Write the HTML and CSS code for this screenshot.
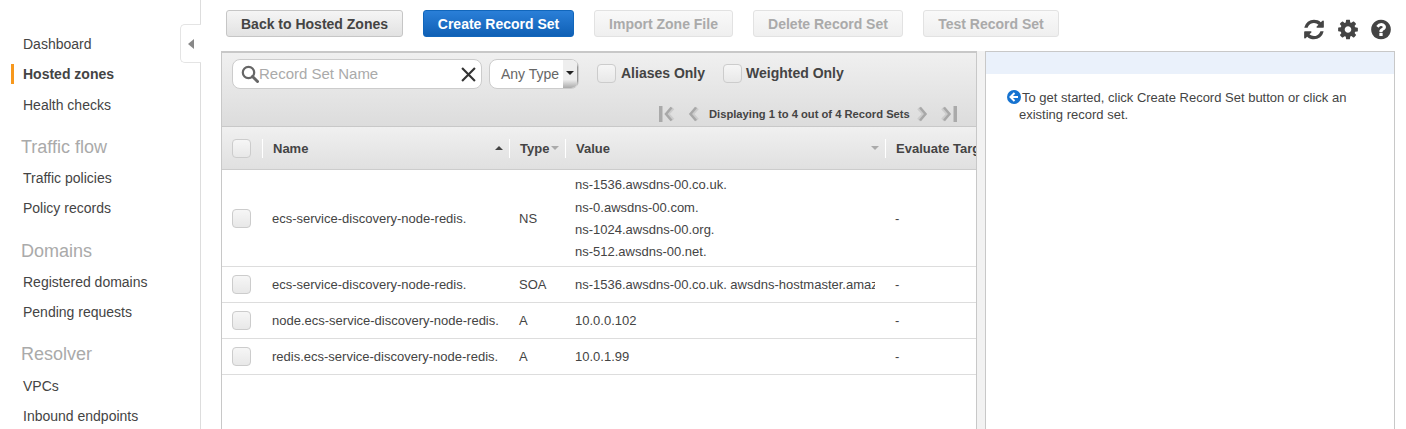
FILE: index.html
```html
<!DOCTYPE html>
<html lang="en">
<head>
  <meta charset="UTF-8">
  <meta name="viewport" content="width=device-width, initial-scale=1.0">
  <title>Route 53 Record Sets</title>
  <link rel="stylesheet" href="styles.css">
</head>
<body>
  <div class="page">
    <nav class="sidebar">
      <a class="nav-item">Dashboard</a>
      <a class="nav-item active">Hosted zones</a>
      <a class="nav-item">Health checks</a>
      <h2 class="nav-head">Traffic flow</h2>
      <a class="nav-item">Traffic policies</a>
      <a class="nav-item">Policy records</a>
      <h2 class="nav-head">Domains</h2>
      <a class="nav-item">Registered domains</a>
      <a class="nav-item">Pending requests</a>
      <h2 class="nav-head">Resolver</h2>
      <a class="nav-item">VPCs</a>
      <a class="nav-item">Inbound endpoints</a>
      <div class="collapse-tab"><span class="collapse-arrow"></span></div>
    </nav>

    <main class="main">
      <div class="toolbar">
        <button class="btn btn-back">Back to Hosted Zones</button>
        <button class="btn btn-primary">Create Record Set</button>
        <button class="btn btn-off btn-import">Import Zone File</button>
        <button class="btn btn-off btn-delete">Delete Record Set</button>
        <button class="btn btn-off btn-test">Test Record Set</button>
        <div class="tool-icons">
          <svg class="tool-icon" viewBox="0 0 1536 1792"><path d="M1511 1056q0 5-1 7-64 268-268 434.5t-478 166.5q-146 0-282.5-55t-243.5-157l-129 129q-19 19-45 19t-45-19-19-45v-448q0-26 19-45t45-19h448q26 0 45 19t19 45-19 45l-137 137q71 66 161 102t187 36q134 0 250-65t186-179q11-17 53-117 8-23 30-23h192q13 0 22.5 9.5t9.5 22.5zm25-800v448q0 26-19 45t-45 19h-448q-26 0-45-19t-19-45 19-45l138-138q-148-137-349-137-134 0-250 65t-186 179q-11 17-53 117-8 23-30 23h-199q-13 0-22.5-9.5t-9.5-22.5v-7q65-268 270-434.5t480-166.5q146 0 284 55.5t245 156.5l130-129q19-19 45-19t45 19 19 45z"/></svg>
          <svg class="tool-icon" viewBox="0 0 1536 1792"><path d="M1024 896q0-106-75-181t-181-75-181 75-75 181 75 181 181 75 181-75 75-181zm512-109v222q0 12-8 23t-20 13l-185 28q-19 54-39 91 35 50 107 138 10 12 10 25t-9 23q-27 37-99 108t-94 71q-12 0-26-9l-138-108q-44 23-91 38-16 136-29 186-7 28-36 28h-222q-14 0-24.5-8.5t-11.5-21.5l-28-184q-49-16-90-37l-141 107q-10 9-25 9-14 0-25-11-126-114-165-168-7-10-7-23 0-12 8-23 15-21 51-66.5t54-70.5q-27-50-41-99l-183-27q-13-2-21-12.5t-8-23.5v-222q0-12 8-23t19-13l186-28q14-46 39-92-40-57-107-138-10-12-10-24 0-10 9-23 26-36 98.5-107.5t94.5-71.5q13 0 26 10l138 107q44-23 91-38 16-136 29-186 7-28 36-28h222q14 0 24.5 8.5t11.5 21.5l28 184q49 16 90 37l142-107q9-9 24-9 13 0 25 10 129 119 165 170 7 8 7 22 0 12-8 23-15 21-51 66.5t-54 70.5q26 50 41 98l183 28q13 2 21 12.5t8 23.5z"/></svg>
          <svg class="tool-icon" viewBox="0 0 1536 1792"><path d="M896 1376v-192q0-14-9-23t-23-9h-192q-14 0-23 9t-9 23v192q0 14 9 23t23 9h192q14 0 23-9t9-23zm256-672q0-88-55.5-163t-138.5-116-170-41q-243 0-371 213-15 24 8 42l132 100q7 6 19 6 16 0 25-12 53-68 86-92 34-24 86-24 48 0 85.5 26t37.5 59q0 38-20 61t-68 45q-63 28-115.5 86.5t-52.5 125.5v36q0 14 9 23t23 9h192q14 0 23-9t9-23q0-19 21.5-49.5t54.5-49.5q32-18 49-28.5t46-35 44.5-48 28-60.5 12.5-81zm384 192q0 209-103 385.5t-279.5 279.5-385.5 103-385.5-103-279.5-279.5-103-385.5 103-385.5 279.5-279.5 385.5-103 385.5 103 279.5 279.5 103 385.5z"/></svg>
        </div>
      </div>

      <div class="panels">
        <section class="records">
          <div class="filters">
            <div class="filter-row">
              <div class="search">
                <svg class="search-icon" viewBox="0 0 18 18"><circle cx="7.5" cy="7.5" r="5.7" fill="none" stroke="#666" stroke-width="2.2"/><path d="M11.5 11.5l5 5" stroke="#666" stroke-width="3" stroke-linecap="round"/></svg>
                <span class="search-text">Record Set Name</span>
                <svg class="search-clear" viewBox="0 0 14 14"><path d="M1 1l12 12M13 1L1 13" stroke="#333" stroke-width="2"/></svg>
              </div>
              <div class="type-select">
                <span class="type-text">Any Type</span>
                <span class="type-btn"><span class="type-caret"></span></span>
              </div>
              <label class="check-label check-aliases"><span class="checkbox"></span>Aliases Only</label>
              <label class="check-label check-weighted"><span class="checkbox"></span>Weighted Only</label>
            </div>
            <div class="pager">
              <svg class="pager-icon pager-first" viewBox="0 0 18 16"><path d="M2 0h3.500v16H2z" fill="#aaa"/><path d="M16 2l-5.500 6 5.500 6" fill="none" stroke="#ccc" stroke-width="3.500"/><path d="M14.500 1.500L9 8l5.500 6.500" fill="none" stroke="#a8a8a8" stroke-width="2.500"/></svg>
              <svg class="pager-icon pager-prev" viewBox="0 0 12 16"><path d="M9.500 2L4 8l5.500 6" fill="none" stroke="#ccc" stroke-width="3.500"/><path d="M8 1.500L2.500 8 8 14.500" fill="none" stroke="#a8a8a8" stroke-width="2.500"/></svg>
              <span class="pager-text">Displaying 1 to 4 out of 4 Record Sets</span>
              <svg class="pager-icon pager-next" viewBox="0 0 12 16"><path d="M2.500 2L8 8l-5.500 6" fill="none" stroke="#ccc" stroke-width="3.500"/><path d="M4 1.500L9.500 8 4 14.500" fill="none" stroke="#a8a8a8" stroke-width="2.500"/></svg>
              <svg class="pager-icon pager-last" viewBox="0 0 18 16"><path d="M14.500 0H18v16h-3.500z" fill="#aaa"/><path d="M3.500 2L9 8l-5.500 6" fill="none" stroke="#ccc" stroke-width="3.500"/><path d="M5 1.500L10.500 8 5 14.500" fill="none" stroke="#a8a8a8" stroke-width="2.500"/></svg>
            </div>
          </div>

          <table class="grid">
            <colgroup>
              <col class="col-check"><col class="col-name"><col class="col-type"><col class="col-value"><col class="col-eval">
            </colgroup>
            <thead>
              <tr>
                <th class="check-cell"><span class="checkbox"></span></th>
                <th><div class="th-in">Name<span class="sort sort-up"></span></div></th>
                <th><div class="th-in">Type<span class="sort"></span></div></th>
                <th><div class="th-in">Value<span class="sort"></span></div></th>
                <th><div class="th-in">Evaluate Target Health</div></th>
              </tr>
            </thead>
            <tbody>
              <tr class="row-ns">
                <td class="check-cell"><span class="checkbox"></span></td>
                <td>ecs-service-discovery-node-redis.</td>
                <td>NS</td>
                <td><div class="value-line">ns-1536.awsdns-00.co.uk.</div><div class="value-line">ns-0.awsdns-00.com.</div><div class="value-line">ns-1024.awsdns-00.org.</div><div class="value-line">ns-512.awsdns-00.net.</div></td>
                <td>-</td>
              </tr>
              <tr>
                <td class="check-cell"><span class="checkbox"></span></td>
                <td>ecs-service-discovery-node-redis.</td>
                <td>SOA</td>
                <td><div class="value-clip">ns-1536.awsdns-00.co.uk. awsdns-hostmaster.amaz</div></td>
                <td>-</td>
              </tr>
              <tr>
                <td class="check-cell"><span class="checkbox"></span></td>
                <td>node.ecs-service-discovery-node-redis.</td>
                <td>A</td>
                <td>10.0.0.102</td>
                <td>-</td>
              </tr>
              <tr>
                <td class="check-cell"><span class="checkbox"></span></td>
                <td>redis.ecs-service-discovery-node-redis.</td>
                <td>A</td>
                <td>10.0.1.99</td>
                <td>-</td>
              </tr>
            </tbody>
          </table>
        </section>

        <div class="splitter"></div>

        <aside class="details">
          <div class="details-bar"></div>
          <p class="details-text">
            <svg class="info-icon" viewBox="0 0 14 14"><circle cx="7" cy="7" r="7" fill="#1673d0"/><path d="M7.500 3L3.500 7l4 4M4 7h7" fill="none" stroke="#fff" stroke-width="2"/></svg>To get started, click Create Record Set button or click an existing record set.
          </p>
        </aside>
      </div>
    </main>
  </div>
</body>
</html>
```

FILE: styles.css
```css
html, body {
  margin: 0;
  height: 429px;
  overflow: hidden;
  background: white;
  color: #444;
  font-family: "Liberation Sans", Arial, sans-serif;
}
.page {
  display: flex;
  height: 429px;
}

/* sidebar */
.sidebar {
  position: relative;
  flex: 0 0 201px;
  box-sizing: border-box;
  padding: 29.2px 0 0 23px;
  border-right: 1px solid #ddd;
}
.nav-item {
  display: block;
  height: 30.2px;
  line-height: 30px;
  font-size: 14px;
  color: #444;
  position: relative;
}
.nav-item.active {
  font-weight: bold;
}
.nav-item.active::before {
  content: "";
  position: absolute;
  left: -12px;
  top: 5px;
  width: 3px;
  height: 20px;
  background: #f7981d;
}
.nav-head {
  margin: 11.2px 0 0 -2px;
  height: 32.2px;
  line-height: 32px;
  font-size: 18px;
  font-weight: normal;
  color: #aaa;
}
.collapse-tab {
  position: absolute;
  left: 180px;
  top: 24px;
  width: 21px;
  height: 39px;
  box-sizing: border-box;
  background: white;
  border: 1px solid #e4e4e4;
  border-right: none;
  border-radius: 5px 0 0 5px;
  display: flex;
  align-items: center;
  padding-left: 7px;
}
.collapse-arrow {
  border-right: 6px solid #888;
  border-top: 5px solid transparent;
  border-bottom: 5px solid transparent;
}

/* toolbar */
.main {
  flex: 1;
  min-width: 0;
  padding: 10px 11px 0 20px;
}
.toolbar {
  display: flex;
  height: 41px;
  padding-left: 5px;
}
.btn {
  height: 27px;
  padding: 0;
  margin-right: 20px;
  font-family: inherit;
  font-size: 14px;
  font-weight: bold;
  color: #444;
  border: 1px solid #c6c6c6;
  border-radius: 3px;
  background: linear-gradient(#f5f5f5, #e2e2e2);
}
.btn-back { width: 177px; }
.btn-primary {
  width: 151px;
  color: white;
  border-color: #1166bb;
  background: linear-gradient(#2a7fd8, #0f60b5);
}
.btn-off {
  color: #aaa;
  border-color: #e2e2e2;
  background: linear-gradient(#f9f9f9, #efefef);
}
.btn-import { width: 139px; }
.btn-delete { width: 150px; }
.btn-test { width: 136px; }
.tool-icons {
  display: flex;
  gap: 13.5px;
  margin: 8px 0 0 auto;
  padding-right: 4px;
}
.tool-icon {
  width: 20px;
  height: 23px;
  fill: #444;
}

/* panels */
.panels {
  display: flex;
  height: 392px;
}
.records {
  flex: 0 0 756px;
  box-sizing: border-box;
  height: 100%;
  overflow: hidden;
  border: 1px solid #c8c8c8;
  border-top-width: 2px;
}
.filters {
  height: 74px;
  box-sizing: border-box;
  padding: 6px 0 0 10px;
  background: linear-gradient(#f0f0f0, #dcdcdc);
  border-bottom: 1px solid #c8c8c8;
}
.filter-row {
  display: flex;
  align-items: center;
  height: 30px;
}
.search {
  display: flex;
  align-items: center;
  box-sizing: border-box;
  width: 250px;
  height: 30px;
  padding: 0 5px 0 8px;
  background: white;
  border: 1px solid #ccc;
  border-radius: 8px;
}
.search-icon {
  flex: none;
  width: 18px;
  height: 18px;
}
.search-text {
  flex: 1;
  padding-bottom: 2px;
  font-size: 15px;
  color: #aaa;
}
.search-clear {
  width: 15px;
  height: 15px;
}
.type-select {
  display: flex;
  box-sizing: border-box;
  width: 90px;
  height: 30px;
  margin-left: 7px;
  background: white;
  border: 1px solid #ccc;
  border-radius: 8px;
  overflow: hidden;
}
.type-text {
  flex: 1;
  padding-left: 11px;
  line-height: 28px;
  font-size: 14px;
  color: #666;
}
.type-btn {
  display: flex;
  align-items: center;
  justify-content: center;
  width: 14px;
  background: linear-gradient(#eee 70%, #aaa);
  border-right: 1px solid #999;
}
.type-caret {
  margin-bottom: 2px;
  border-top: 4px solid #222;
  border-left: 4px solid transparent;
  border-right: 4px solid transparent;
}
.checkbox {
  display: inline-block;
  box-sizing: border-box;
  width: 19px;
  height: 19px;
  background: linear-gradient(#f6f6f6, #e8e8e8);
  border: 1px solid #ccc;
  border-radius: 4px;
}
.check-label {
  display: flex;
  align-items: center;
  gap: 5px;
  font-size: 14px;
  font-weight: bold;
  margin-bottom: 2px;
}
.check-aliases {
  margin-left: 18px;
  margin-right: 18px;
}
.check-weighted {
  gap: 4px;
}
.pager {
  display: flex;
  align-items: center;
  height: 18px;
  margin-top: 16px;
  padding-left: 425px;
}
.pager-icon {
  flex: none;
  height: 16px;
}
.pager-first { width: 18px; }
.pager-prev { width: 12px; margin-left: 13px; }
.pager-text {
  width: 201px;
  margin: 0 8px 0 9px;
  font-size: 11.2px;
  font-weight: bold;
  white-space: nowrap;
}
.pager-next { width: 12px; margin-left: -2px; }
.pager-last { width: 18px; margin-left: 11px; }

/* table */
.grid {
  width: 863px;
  table-layout: fixed;
  border-collapse: collapse;
  font-size: 13px;
}
.col-check { width: 40px; }
.col-name { width: 247px; }
.col-type { width: 56px; }
.col-value { width: 320px; }
.col-eval { width: 200px; }
.grid th {
  height: 42px;
  padding: 0;
  text-align: left;
  background: linear-gradient(#f0f0f0, #e0e0e0);
  border-bottom: 1px solid #ccc;
}
.th-in {
  display: flex;
  align-items: center;
  justify-content: space-between;
  height: 19px;
  padding: 0 6px 0 10px;
  white-space: nowrap;
  border-left: 1px solid #fff;
}
.sort {
  border-top: 4px solid #aaa;
  border-left: 4px solid transparent;
  border-right: 4px solid transparent;
}
.sort-up {
  border-top: none;
  border-bottom: 4px solid #444;
}
.grid td {
  height: 36px;
  padding: 0 0 0 10px;
  box-sizing: border-box;
  border-bottom: 1px solid #ddd;
  white-space: nowrap;
}
.grid .check-cell {
  padding: 0 0 0 10px;
}
.check-cell .checkbox {
  display: block;
}
.value-line {
  line-height: 22.3px;
}
.row-ns td {
  height: 97px;
  padding-top: 1.6px;
}
.value-clip {
  width: 300px;
  overflow: hidden;
}

/* details */
.splitter {
  flex: 0 0 8px;
  background: #f2f2f2;
}
.details {
  flex: 0 0 410px;
  box-sizing: border-box;
  height: 100%;
  border: 1px solid #c8c8c8;
}
.details-bar {
  height: 22px;
  background: #eaf1fb;
}
.details-text {
  margin: 15px 20px 0 33px;
  font-size: 13px;
  line-height: 17px;
}
.info-icon {
  width: 14px;
  height: 14px;
  margin: 0 1px 0 -12px;
  vertical-align: -2px;
}
```
